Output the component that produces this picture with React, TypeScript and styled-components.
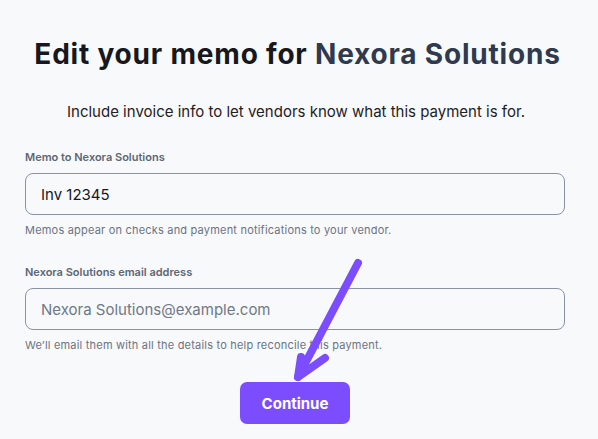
import React from 'react'
import styled, {createGlobalStyle} from 'styled-components'

const GlobalStyle = createGlobalStyle`
  html, body {
    margin: 0;
    padding: 0;
    background: #f8f9fb;
    font-family: Inter, "Noto Sans", sans-serif;
  }
`

const Page = styled.div`
  position: relative;
  width: 598px;
  height: 439px;
  overflow: hidden;
  display: flex;
  flex-direction: column;
  align-items: center;
`

const Title = styled.h1`
  margin: 35px 0 0 -3px;
  font-size: 28px;
  line-height: 38px;
  font-weight: 700;
  color: #16181d;
  letter-spacing: 0.8px;
  span {
    color: #2f3a4f;
  }
`

const Subtitle = styled.p`
  margin: 28px 0 0 -6px;
  font-size: 15px;
  line-height: 22px;
  color: #1f2125;
`

const Form = styled.div`
  width: 540px;
  margin: 26px 0 0 -8px;
  display: flex;
  flex-direction: column;
`

const Field = styled.div`
  display: flex;
  flex-direction: column;
  margin-bottom: ${(p: {gap: number}) => p.gap}px;
`

const Label = styled.label`
  font-size: 11px;
  line-height: 16px;
  font-weight: 600;
  color: #5d6775;
  margin-bottom: 8px;
`

const Input = styled.input`
  box-sizing: border-box;
  height: 42px;
  border: 1px solid #8a93a5;
  border-radius: 8px;
  background: #f8f9fb;
  padding: 0 15px;
  font-family: inherit;
  font-size: 15px;
  color: #16181d;
  outline: none;
  &::placeholder {
    color: #6f7888;
  }
`

const Help = styled.div`
  margin-top: 7px;
  font-size: 11px;
  line-height: 16px;
  color: #6b7482;
  letter-spacing: 0.2px;
`

const Button = styled.button`
  margin: 0 0 0 -8px;
  width: 110px;
  height: 42px;
  border: none;
  border-radius: 7px;
  background: #7c4dff;
  color: #ffffff;
  font-family: inherit;
  font-size: 15px;
  font-weight: 700;
`

const Arrow = styled.svg`
  position: absolute;
  left: 285px;
  top: 255px;
`

export default function App() {
    return <>
        <GlobalStyle/>
        <Page>
            <Title>Edit your memo for <span>Nexora Solutions</span></Title>
            <Subtitle>Include invoice info to let vendors know what this payment is for.</Subtitle>
            <Form>
                <Field gap={26}>
                    <Label>Memo to Nexora Solutions</Label>
                    <Input defaultValue="Inv 12345"/>
                    <Help>Memos appear on checks and payment notifications to your vendor.</Help>
                </Field>
                <Field gap={29}>
                    <Label>Nexora Solutions email address</Label>
                    <Input placeholder="Nexora Solutions@example.com"/>
                    <Help>We’ll email them with all the details to help reconcile this payment.</Help>
                </Field>
            </Form>
            <Button>Continue</Button>
            <Arrow width="90" height="130" viewBox="0 0 90 130">
                <g stroke="#7c4dff" strokeWidth="8" strokeLinecap="round" strokeLinejoin="round" fill="none">
                    <path d="M73 8 L13 122"/>
                    <path d="M16 102 L13 122 L40 103"/>
                </g>
            </Arrow>
        </Page>
    </>
}
